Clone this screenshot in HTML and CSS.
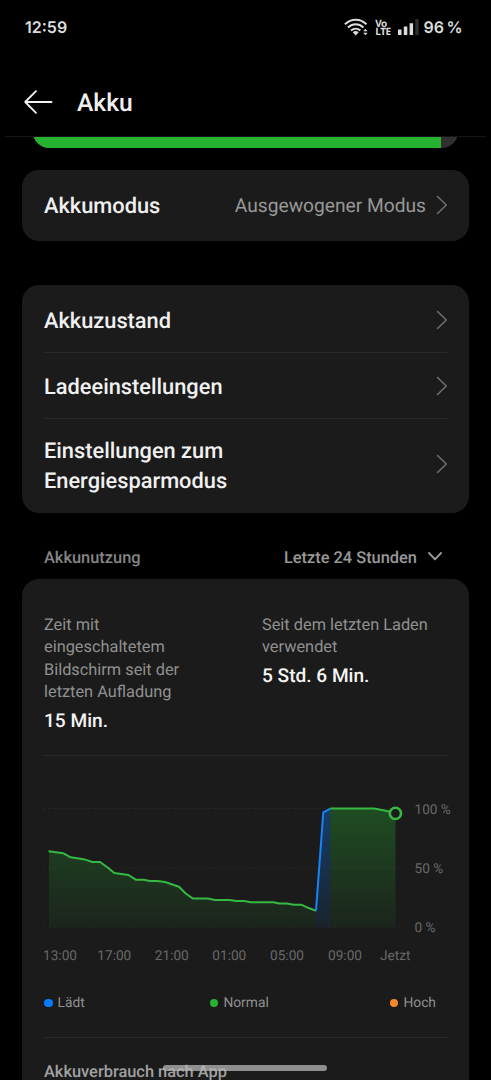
FILE: index.html
```html
<!DOCTYPE html>
<html lang="de">
<head>
<meta charset="utf-8">
<title>Akku</title>
<link rel="stylesheet" href="styles.css">
</head>
<body>
<div class="screen">
  <header class="status">
    <span class="clock">12:59</span>
    <div class="indicators">
      <svg class="wifi" width="24" height="18" viewBox="0 0 24 18">
        <g fill="none" stroke="#dcdcdc" stroke-width="2">
          <path d="M.9 6.300C7.300.1 16.100.1 22.500 6.300"/>
          <path d="M4 9.500c4.600-4.200 10.800-4.200 15.400 0"/>
          <path d="M7 12.600c2.800-2.500 6.600-2.500 9.400 0"/>
        </g>
        <path d="M8.700 14.300q3-2.400 6 0l-3 3.100zM19.200 13.200l2.200-2.500 2.200 2.500zM19.200 14.700h4.400l-2.200 2.500z" fill="#dcdcdc"/>
      </svg>
      <div class="volte"><span>Vo</span><span>LTE</span></div>
      <svg class="signal" width="21" height="17" viewBox="0 0 21 17">
        <path d="M0 10.500h3.500V16H0zM5.800 7.500h3.500V16H5.800zM11.600 4.300h3.500V16h-3.500z" fill="#dcdcdc"/>
        <path d="M17.300 0h3.300v16h-3.300z" fill="#303030"/>
      </svg>
      <span class="percent">96 %</span>
    </div>
  </header>
  <div class="titlebar">
    <svg width="29" height="24" viewBox="0 0 29 24" fill="none" stroke="#f2f2f2" stroke-width="1.800" stroke-linecap="round" stroke-linejoin="round"><path d="M27.500 12H1.200M12 1.200 1.200 12 12 22.800"/></svg>
    <h1>Akku</h1>
  </div>
  <main>
    <div class="level"><div class="level-track"><div class="level-fill"></div></div></div>

    <section class="card mode">
      <span class="label">Akkumodus</span>
      <span class="value">Ausgewogener Modus</span>
      <svg class="chev" viewBox="0 0 12 20"><path d="M1.500 1.500 10.300 10 1.500 18.500"/></svg>
    </section>

    <section class="card list">
      <div class="row"><span class="label">Akkuzustand</span><svg class="chev" viewBox="0 0 12 20"><path d="M1.500 1.500 10.300 10 1.500 18.500"/></svg></div>
      <div class="row"><span class="label">Ladeeinstellungen</span><svg class="chev" viewBox="0 0 12 20"><path d="M1.500 1.500 10.300 10 1.500 18.500"/></svg></div>
      <div class="row tall"><span class="label">Einstellungen zum<br>Energiesparmodus</span><svg class="chev" viewBox="0 0 12 20"><path d="M1.500 1.500 10.300 10 1.500 18.500"/></svg></div>
    </section>

    <div class="section-head">
      <span class="section-title">Akkunutzung</span>
      <span class="range">Letzte 24 Stunden</span>
      <svg width="14" height="9" viewBox="0 0 14 9" fill="none" stroke="#989898" stroke-width="1.900" stroke-linecap="round" stroke-linejoin="round"><path d="M1 1l6 6.400L13 1"/></svg>
    </div>

    <section class="card usage">
      <div class="stats">
        <div class="stat"><p>Zeit mit<br>eingeschaltetem<br>Bildschirm seit der<br>letzten Aufladung</p><strong>15 Min.</strong></div>
        <div class="stat"><p>Seit dem letzten Laden<br>verwendet</p><strong>5 Std. 6 Min.</strong></div>
      </div>
      <svg class="chart" width="447" height="230" viewBox="22 756 447 230">
        <defs>
          <linearGradient id="green" gradientUnits="userSpaceOnUse" x1="0" y1="808" x2="0" y2="928"><stop offset="0" stop-color="#25b331" stop-opacity=".33"/><stop offset="1" stop-color="#25b331" stop-opacity=".06"/></linearGradient>
          <linearGradient id="greenLow" gradientUnits="userSpaceOnUse" x1="0" y1="851" x2="0" y2="928"><stop offset="0" stop-color="#25b331" stop-opacity=".22"/><stop offset="1" stop-color="#25b331" stop-opacity=".06"/></linearGradient>
          <linearGradient id="blue" gradientUnits="userSpaceOnUse" x1="0" y1="808" x2="0" y2="928"><stop offset="0" stop-color="#0a7cf5" stop-opacity=".36"/><stop offset="1" stop-color="#0a7cf5" stop-opacity=".08"/></linearGradient>
        </defs>
        <path class="grid" d="M43 808.500H400M43 868H400M43 927H400"/>
        <path fill="url(#greenLow)" d="M49 851.200 63.500 853.300 70.700 857.300 85 859.600 92.500 862H100L107.300 867.300 114.300 873 128.500 875 135.700 879.700H143.300L150 880.900H157.300L165 882 179 886.700 186 893.700 193 898.600H207.700L215 899.900H229.300L236.700 901.100H244L251 902.300H273.300L279.300 903.500H286.700L294 904.800H301.700L309.300 908.300 316 910.700V927.300H49z"/>
        <path fill="url(#blue)" d="M316 910.700 323.300 812.300 330.300 808.600V927.300H316z"/>
        <path fill="url(#green)" d="M330.300 808.600H374L388.300 811.300 395.500 813.300V927.300H330.300z"/>
        <path class="line" d="M48.500 851.200 63.500 853.300 70.700 857.300 85 859.600 92.500 862H100L107.300 867.300 114.300 873 128.500 875 135.700 879.700H143.300L150 880.900H157.300L165 882 179 886.700 186 893.700 193 898.600H207.700L215 899.900H229.300L236.700 901.100H244L251 902.300H273.300L279.300 903.500H286.700L294 904.800H301.700L309.300 908.300 316 910.700M330.300 808.600H374L388.300 811.300 391 812"/>
        <path class="line charging" d="M316 910.700 323.300 812.300 330.300 808.600"/>
        <circle class="now" cx="395.400" cy="813.400" r="5.600"/>
        <g class="axis">
          <text x="414.500" y="814">100 %</text><text x="414.500" y="873">50 %</text><text x="414.500" y="932">0 %</text>
          <g text-anchor="middle"><text x="60" y="959.500">13:00</text><text x="114.300" y="959.500">17:00</text><text x="171.800" y="959.500">21:00</text><text x="229.300" y="959.500">01:00</text><text x="287" y="959.500">05:00</text><text x="345" y="959.500">09:00</text><text x="395.300" y="959.500">Jetzt</text></g>
        </g>
      </svg>
      <div class="legend">
        <span><i class="dot blue"></i>Lädt</span>
        <span class="middle"><i class="dot green"></i>Normal</span>
        <span><i class="dot orange"></i>Hoch</span>
      </div>
      <h2>Akkuverbrauch nach App</h2>
    </section>
  </main>
  <div class="home-indicator"></div>
</div>
</body>
</html>
```
FILE: styles.css
```css
* { box-sizing: border-box; }
body { margin: 0; background: #000; }
.screen { position: relative; width: 491px; height: 1080px; overflow: hidden; background: #000; color: #f0f0f0; font-family: Roboto, "Noto Sans", sans-serif; text-rendering: geometricPrecision; }
.status { display: flex; align-items: center; justify-content: space-between; height: 54px; padding: 0 28.500px 0 25px; color: #dcdcdc; font-family: Inter, Roboto, sans-serif; font-weight: 600; font-size: 16px; line-height: 20px; }
.indicators { display: flex; align-items: center; }
.volte { display: flex; flex-direction: column; margin: 0 8px 0 7px; font: 700 10px/8.500px "Open Sans", sans-serif; letter-spacing: -.6px; }
.percent { margin-left: 4px; word-spacing: -1.500px; }
.titlebar { display: flex; align-items: center; gap: 24px; height: 83px; margin: 0 5px; padding: 14px 0 0 19px; border-bottom: 1px solid #161616; }
h1 { margin: 0; padding-top: 3px; font-weight: 500; font-size: 24.600px; line-height: 30px; }
.level { height: 11px; overflow: hidden; display: flex; align-items: flex-end; padding: 0 33px; }
.level-track { flex: none; width: 425px; height: 40px; border-radius: 16px; background: #303030; overflow: hidden; }
.level-fill { width: 96%; height: 100%; background: #25b331; }
.card { margin: 0 22px; background: #1b1b1b; border-radius: 17px; }
.label { padding-top: 4px; font-weight: 500; font-size: 21.800px; line-height: 30px; }
.chev { width: 12px; height: 20px; fill: none; stroke: #707070; stroke-width: 1.500; stroke-linecap: round; stroke-linejoin: round; }
.mode { display: flex; align-items: center; height: 70.500px; margin-top: 22px; padding: 0 21px 0 22px; }
.value { margin-left: auto; margin-right: 10px; padding-top: 1px; color: #989898; font-size: 19.200px; }
.list { height: 228.500px; margin-top: 44px; padding: 2px 22px 0; }
.row { display: flex; align-items: center; justify-content: space-between; height: 66px; padding-top: 2px; border-bottom: 1px solid #292929; }
.row .chev { margin-right: -1px; }
.row.tall { height: 91.500px; padding-top: 0; border: 0; }
.row.tall .label { padding-top: 5px; }
.section-head { display: flex; align-items: center; height: 66px; padding: 21px 49px 0 44px; color: #989898; font-size: 16.400px; font-weight: 500; line-height: 22px; }
.section-head span { padding-top: 4px; }
.section-title { color: #858585; }
.range { margin-left: auto; margin-right: 11px; }
.usage { height: 540px; padding-top: 34.500px; }
.stats { display: grid; grid-template-columns: 218px 1fr; height: 142.500px; margin: 0 22px; border-bottom: 1px solid #292929; }
.stat p { margin: 0 0 3.500px; color: #909090; font-size: 16.350px; line-height: 22.500px; }
.stat strong { display: block; color: #f5f5f5; font-weight: 500; font-size: 19.100px; line-height: 28px; }
.chart { display: block; }
.grid { fill: none; stroke: #242424; stroke-width: 1; stroke-dasharray: 3 2; }
.line { fill: none; stroke: #36b944; stroke-width: 2; stroke-linejoin: round; }
.charging { stroke: #1583fa; }
.now { fill: #1b1b1b; stroke: #36b944; stroke-width: 2.600; }
.axis { fill: #686868; font-size: 13.600px; }
.legend { display: flex; justify-content: space-between; height: 52px; margin: 0 22px; padding: 6px 11px 0 0; border-bottom: 1px solid #292929; color: #909090; font-size: 13.800px; line-height: 22px; }
.legend span { display: flex; height: 22px; align-items: center; gap: 5px; }
.legend .middle { margin-left: 4px; }
.dot { width: 8.500px; height: 8.500px; border-radius: 50%; }
.blue { background: #087cff; }
.green { background: #25b331; }
.orange { background: #f5882a; }
h2 { margin: 23px 22px 0; color: #a0a0a0; font-weight: 500; font-size: 16.400px; line-height: 24px; }
.home-indicator { position: absolute; left: 163px; top: 1065px; width: 164px; height: 6px; border-radius: 3px; background: rgba(180, 180, 180, .76); }
```
